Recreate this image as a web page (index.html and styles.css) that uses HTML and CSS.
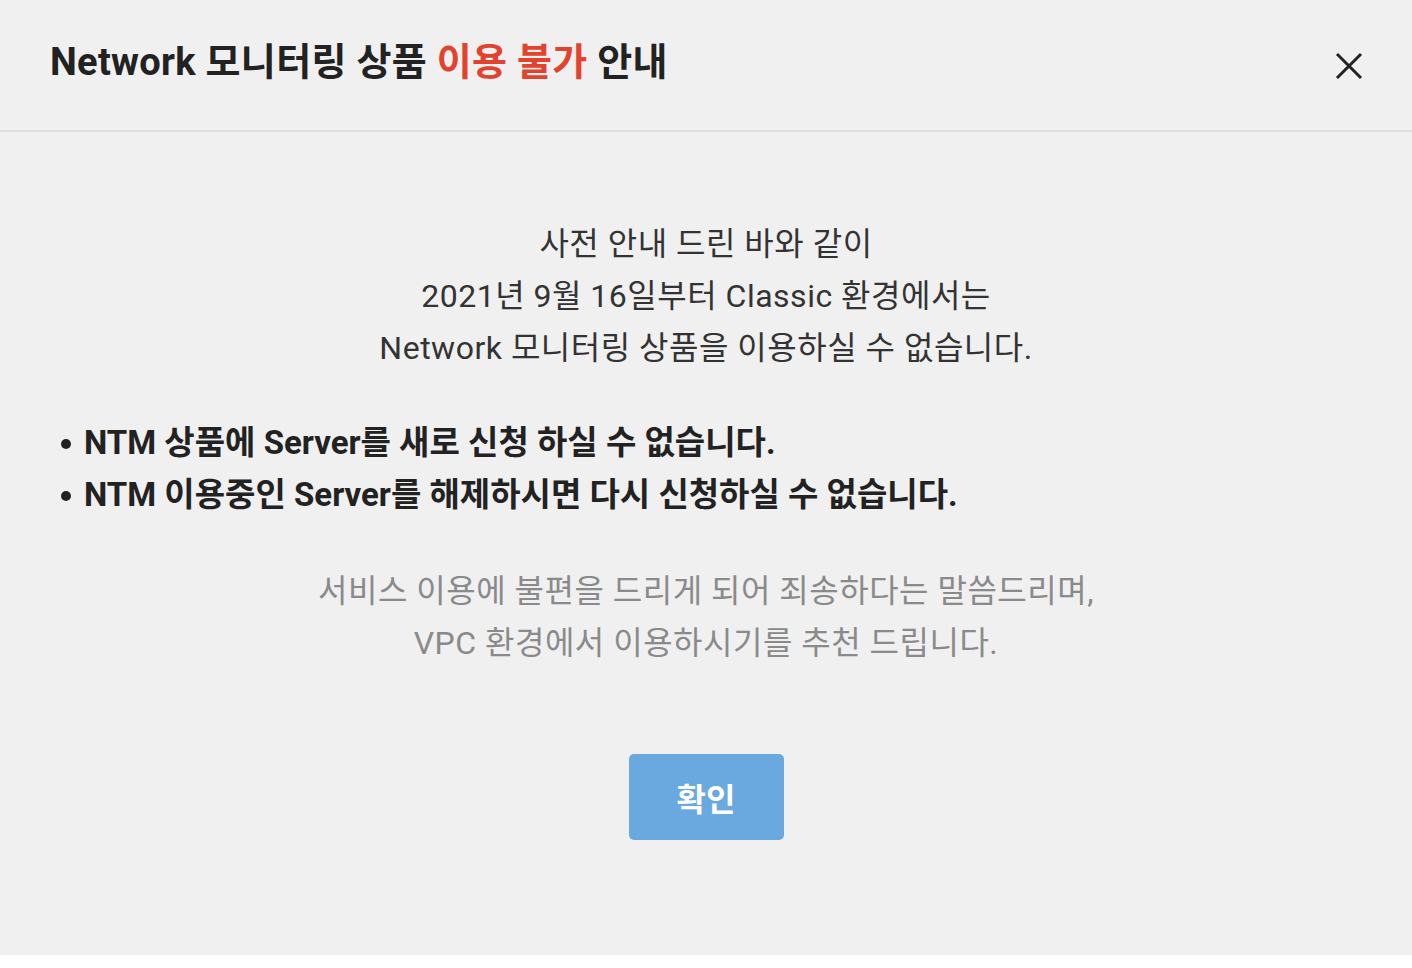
FILE: index.html
```html
<!DOCTYPE html>
<html lang="ko">
<head>
    <meta charset="UTF-8">
    <meta name="viewport" content="width=device-width, initial-scale=1.0">
    <title>Network 모니터링 상품 이용 불가 안내</title>
    <link rel="stylesheet" href="styles.css">
</head>
<body>
    <div class="modal">
        <header class="modal-header">
            <h1>Network 모니터링 상품 <span class="warn">이용 불가</span> 안내</h1>
            <button class="close" aria-label="닫기">
                <svg width="30" height="30" viewBox="0 0 30 30">
                    <path d="M3 3 L27 27 M27 3 L3 27" stroke="#222" stroke-width="3" fill="none"/>
                </svg>
            </button>
        </header>
        <main class="modal-body">
            <p class="notice">
                사전 안내 드린 바와 같이<br>
                2021년 9월 16일부터 Classic 환경에서는<br>
                Network 모니터링 상품을 이용하실 수 없습니다.
            </p>
            <ul class="points">
                <li>NTM 상품에 Server를 새로 신청 하실 수 없습니다.</li>
                <li>NTM 이용중인 Server를 해제하시면 다시 신청하실 수 없습니다.</li>
            </ul>
            <p class="sorry">
                서비스 이용에 불편을 드리게 되어 죄송하다는 말씀드리며,<br>
                VPC 환경에서 이용하시기를 추천 드립니다.
            </p>
            <div class="actions">
                <button class="confirm">확인</button>
            </div>
        </main>
    </div>
</body>
</html>
```

FILE: styles.css
```css
body {
    margin: 0;
    padding: 0;
    background-color: #ffffff;
    font-family: 'Roboto', 'Noto Sans CJK KR', sans-serif;
}
.modal {
    height: 955px;
    background-color: #f0f0f0;
    display: flex;
    flex-direction: column;
}
.modal-header {
    height: 132px;
    border-bottom: 2px solid #dedede;
    display: flex;
    align-items: center;
    justify-content: space-between;
    padding: 0 48px 0 50px;
    box-sizing: border-box;
    flex-shrink: 0;
}
.modal-header h1 {
    margin: 0 0 14px 0;
    font-size: 38px;
    font-weight: 700;
    color: #222;
    letter-spacing: 0.3px;
}
.warn {
    color: #e2432f;
}
.close {
    background: none;
    border: none;
    padding: 0;
    margin-top: 2px;
    width: 30px;
    height: 30px;
    cursor: pointer;
}
.close svg {
    display: block;
}
.modal-body {
    padding-top: 86px;
}
.notice {
    margin: 0;
    text-align: center;
    font-size: 32px;
    line-height: 52px;
    letter-spacing: 0.5px;
    color: #333;
}
.points {
    list-style: none;
    margin: 43px 0 0 0;
    padding: 0 0 0 61px;
}
.points li {
    display: flex;
    align-items: center;
    font-size: 33px;
    font-weight: 700;
    line-height: 52px;
    color: #222;
}
.points li::before {
    content: "";
    width: 10px;
    height: 10px;
    border-radius: 50%;
    background-color: #222;
    margin: 2px 13px 0 0;
    flex-shrink: 0;
}
.sorry {
    margin: 44px 0 0 0;
    text-align: center;
    font-size: 32px;
    line-height: 52px;
    letter-spacing: 0.5px;
    color: #8a8a8a;
}
.actions {
    display: flex;
    justify-content: center;
    margin-top: 85px;
}
.confirm {
    width: 155px;
    height: 86px;
    background-color: #69a9e0;
    color: white;
    border: none;
    border-radius: 5px;
    font-family: 'Roboto', 'Noto Sans CJK KR', sans-serif;
    font-size: 32px;
    font-weight: 700;
    cursor: pointer;
}
```
